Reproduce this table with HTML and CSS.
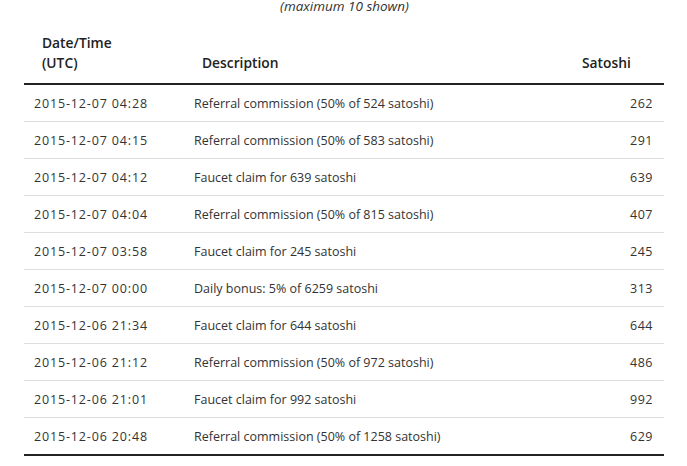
FILE: index.html
```html
<!DOCTYPE html>
<html>
<head>
<meta charset="utf-8">
<link rel="stylesheet" href="styles.css">
</head>
<body>
<div class="caption">(maximum 10 shown)</div>
<table class="tx">
  <thead>
    <tr>
      <th class="c-date">Date/Time<br>(UTC)</th>
      <th class="c-desc">Description</th>
      <th class="c-sat">Satoshi</th>
    </tr>
  </thead>
  <tbody>
    <tr><td class="dt">2015-12-07 04:28</td><td>Referral commission (50% of 524 satoshi)</td><td class="num">262</td></tr>
    <tr><td class="dt">2015-12-07 04:15</td><td>Referral commission (50% of 583 satoshi)</td><td class="num">291</td></tr>
    <tr><td class="dt">2015-12-07 04:12</td><td>Faucet claim for 639 satoshi</td><td class="num">639</td></tr>
    <tr><td class="dt">2015-12-07 04:04</td><td>Referral commission (50% of 815 satoshi)</td><td class="num">407</td></tr>
    <tr><td class="dt">2015-12-07 03:58</td><td>Faucet claim for 245 satoshi</td><td class="num">245</td></tr>
    <tr><td class="dt">2015-12-07 00:00</td><td>Daily bonus: 5% of 6259 satoshi</td><td class="num">313</td></tr>
    <tr><td class="dt">2015-12-06 21:34</td><td>Faucet claim for 644 satoshi</td><td class="num">644</td></tr>
    <tr><td class="dt">2015-12-06 21:12</td><td>Referral commission (50% of 972 satoshi)</td><td class="num">486</td></tr>
    <tr><td class="dt">2015-12-06 21:01</td><td>Faucet claim for 992 satoshi</td><td class="num">992</td></tr>
    <tr><td class="dt">2015-12-06 20:48</td><td>Referral commission (50% of 1258 satoshi)</td><td class="num">629</td></tr>
  </tbody>
</table>
</body>
</html>
```
FILE: styles.css
```css
html, body {
  margin: 0;
  padding: 0;
  background: #fff;
}
body {
  font-family: "Open Sans", "Liberation Sans", sans-serif;
  font-size: 12.5px;
  color: #333;
}
.caption {
  text-align: center;
  font-style: italic;
  font-size: 13.5px;
  line-height: 16px;
  margin-top: -2px;
  padding-left: 2px;
}
.tx {
  border-collapse: collapse;
  margin: 11px 0 0 24px;
  width: 640px;
  table-layout: fixed;
}
.tx th {
  font-weight: 600;
  font-size: 13.8px;
  text-align: left;
  vertical-align: bottom;
  line-height: 20px;
  padding: 8px 18px 10px;
  border-bottom: 2px solid #222;
  color: #222;
}
.c-date { width: 124px; }
.c-desc { width: 344px; }
.tx td {
  line-height: 16px;
  padding: 11px 10px 9px;
  border-bottom: 1px solid #ddd;
  white-space: nowrap;
}
.tx td.dt {
  letter-spacing: 0.85px;
}
.tx tbody tr:last-child td {
  border-bottom: 2px solid #222;
}
.tx td.num {
  text-align: right;
  padding-right: 11px;
  letter-spacing: 0.5px;
}
```
